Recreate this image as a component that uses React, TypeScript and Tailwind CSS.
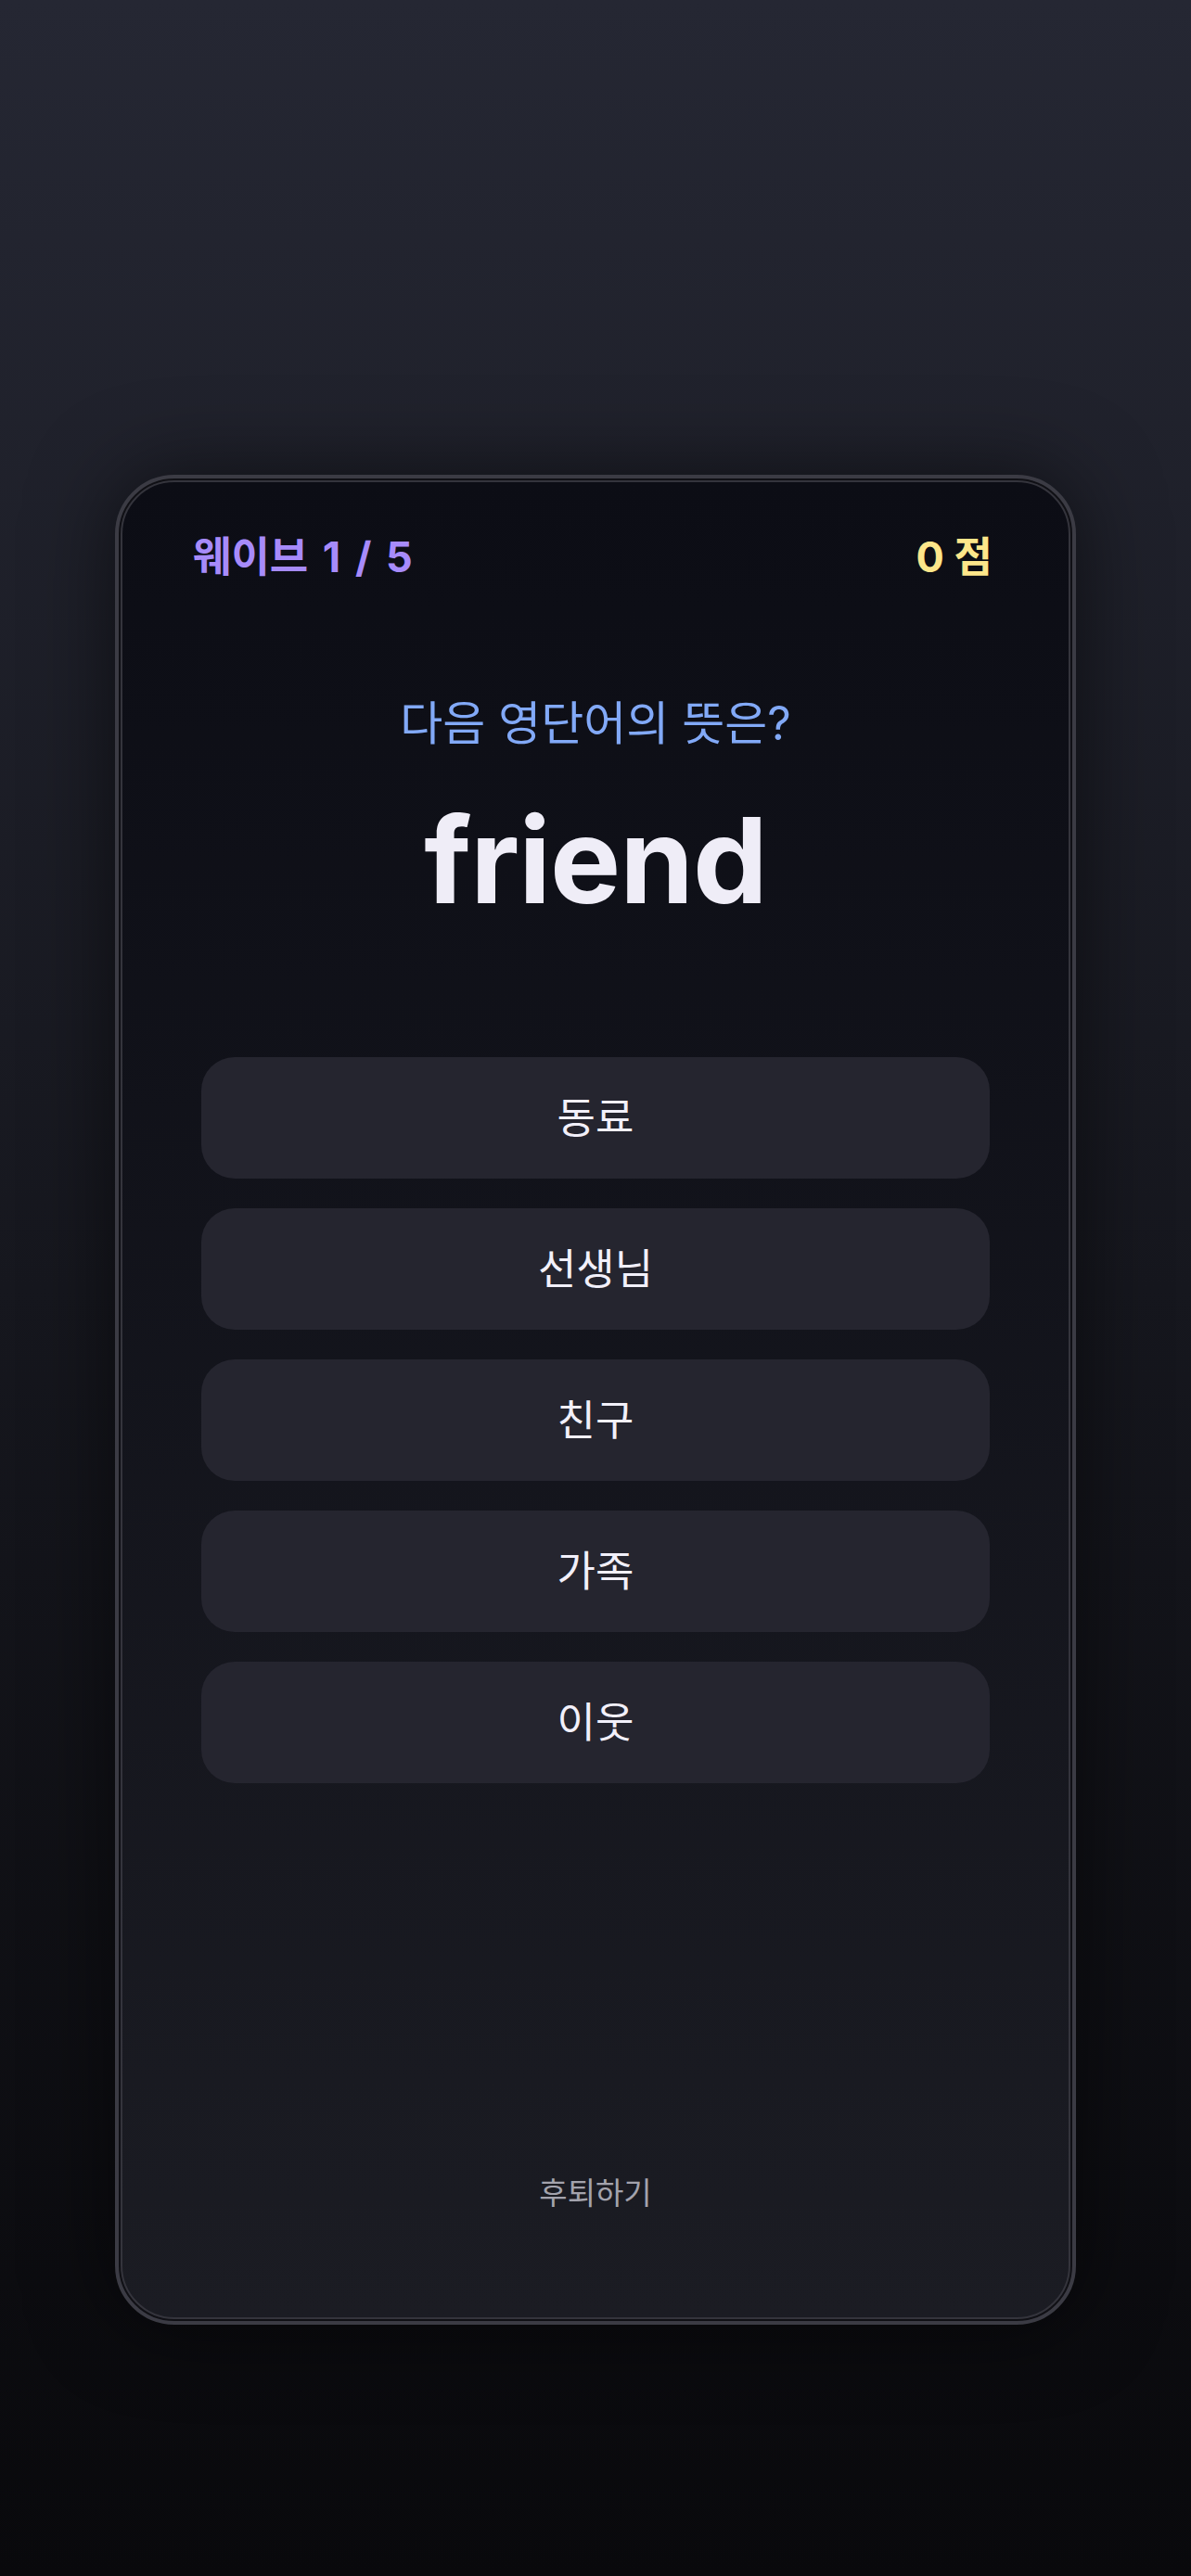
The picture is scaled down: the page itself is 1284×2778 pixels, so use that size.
const choices = ['동료', '선생님', '친구', '가족', '이웃'];

const font = { fontFamily: 'Inter, "Noto Sans CJK KR", sans-serif' };

export default function App() {
  return (
    <div
      className="min-h-[2778px] w-full bg-gradient-to-b from-[#252733] via-[#16171e] to-[#09090c] pt-[512px]"
      style={font}
    >
      <div className="mx-auto w-[1036px] rounded-[64px] border-4 border-[#3b3b44] bg-[#101015] p-[2px] shadow-[0_0_90px_rgba(0,0,0,0.55)]">
        <div className="flex h-[1983px] flex-col rounded-[58px] border-2 border-[#34343c] bg-gradient-to-b from-[#0c0d15] to-[#1b1c23]">
          {/* Header */}
          <div className="flex items-center justify-between pl-[76px] pr-[82px] pt-[47px] text-[45px] font-bold leading-[67px]">
            <span className="text-[#a78bfa] [word-spacing:5px]">웨이브 1 / 5</span>
            <span className="text-[#fde68a]">0 점</span>
          </div>

          {/* Question */}
          <p className="mt-[114px] text-center text-[50px] leading-[64px] text-[#82a9f7]">
            다음 영단어의 뜻은?
          </p>
          <h1 className="mt-[52px] text-center text-[128px] font-bold leading-none tracking-[-1px] text-[#efedf7]">
            friend
          </h1>

          {/* Choices */}
          <div className="mt-[148px] flex flex-col gap-[32px] px-[85px]">
            {choices.map((c) => (
              <button
                key={c}
                className="flex h-[131px] items-center justify-center rounded-[36px] bg-[#25252f] text-[45px] text-[#f2f0fa]"
              >
                {c}
              </button>
            ))}
          </div>

          {/* Footer */}
          <div className="mt-auto pb-[110px] text-center text-[33px] leading-[48px] text-[#a3a3ad]">
            후퇴하기
          </div>
        </div>
      </div>
    </div>
  );
}
